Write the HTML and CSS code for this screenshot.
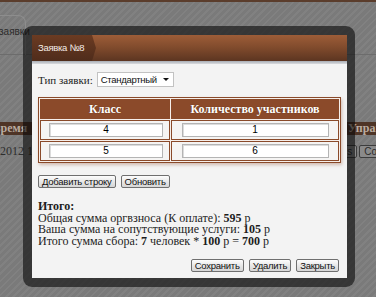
FILE: index.html
```html
<!DOCTYPE html>
<html lang="ru">
<head>
<meta charset="utf-8">
<title>Заявка №8</title>
<link rel="stylesheet" href="styles.css">
</head>
<body>
<div class="page">
  <div class="topline"></div>
  <div class="tabs">
    <div class="tab">заявки</div>
  </div>
  <div class="band">
    <span class="band-left">время</span>
    <span class="band-right">Управ</span>
  </div>
  <div class="row2">
    <span class="date">2012 11</span>
    <span class="bgbtns"><span class="bgbtn">s</span><span class="bgbtn">Co</span></span>
  </div>
</div>

<div class="modal">
  <div class="inner">
    <div class="head">
      <div class="head-tab">Заявка №8</div>
    </div>
    <div class="sep"></div>
    <div class="content">
      <div class="type-row">
        <span class="label">Тип заявки:</span>
        <div class="select"><span>Стандартный</span><span class="caret"></span></div>
      </div>
      <table class="grid">
        <tr><th class="c1">Класс</th><th class="c2">Количество участников</th></tr>
        <tr><td class="c1"><div class="inp w1">4</div></td><td class="c2"><div class="inp w2">1</div></td></tr>
        <tr><td class="c1"><div class="inp w1">5</div></td><td class="c2"><div class="inp w2">6</div></td></tr>
      </table>
      <div class="btns">
        <button class="btn">Добавить строку</button>
        <button class="btn">Обновить</button>
      </div>
      <div class="totals">
        <div class="t-title">Итого:</div>
        <div>Общая сумма оргвзноса (К оплате): <b>595</b> р</div>
        <div>Ваша сумма на сопутствующие услуги: <b>105</b> р</div>
        <div>Итого сумма сбора: <b>7</b> человек * <b>100</b> р = <b>700</b> р</div>
      </div>
      <div class="actions">
        <button class="btn">Сохранить</button>
        <button class="btn">Удалить</button>
        <button class="btn">Закрыть</button>
      </div>
    </div>
  </div>
</div>
</body>
</html>
```
FILE: styles.css
```css
html, body {
  margin: 0;
  padding: 0;
}
body {
  width: 376px;
  height: 297px;
  overflow: hidden;
  position: relative;
  font-family: "Liberation Serif", "DejaVu Serif", serif;
  background: repeating-linear-gradient(135deg, #7a7a7a 0 3px, #818181 3px 5px);
}

/* background page */
.page {
  width: 376px;
}
.topline {
  height: 2px;
  background: #5b3d2c;
}
.tabs {
  height: 53px;
  border-bottom: 1px solid #6c6c6c;
  box-sizing: border-box;
  padding-top: 13px;
}
.tab {
  margin-left: -50px;
  width: 76px;
  height: 40px;
  border: 1px solid #8d8d8d;
  border-bottom: none;
  border-radius: 0 8px 0 0;
  box-sizing: border-box;
  font: 10px "Liberation Sans", sans-serif;
  color: #2c2c2c;
  padding: 10px 0 0 48px;
}
.band {
  margin-top: 67px;
  height: 13px;
  background: #4e3426;
  display: flex;
  justify-content: space-between;
  font-weight: bold;
  font-size: 12px;
  line-height: 13px;
  color: #b9aba0;
}
.band-left {
  margin-left: -6px;
}
.band-right {
  width: 28px;
  overflow: hidden;
  white-space: nowrap;
}
.row2 {
  display: flex;
  justify-content: space-between;
  margin-top: 10px;
  height: 13px;
}
.date {
  font-size: 12px;
  color: #2e2e2e;
  line-height: 13px;
}
.bgbtns {
  display: flex;
  gap: 2px;
  margin-right: -6px;
}
.bgbtn {
  font: 10px "Liberation Sans", sans-serif;
  color: #2a2a2a;
  background: #8a8a8a;
  border: 1px solid #3c3c3c;
  border-radius: 2px;
  padding: 0 4px;
  line-height: 11px;
}

/* modal */
.modal {
  position: absolute;
  left: 23px;
  top: 26px;
  width: 332px;
  height: 261px;
  box-sizing: border-box;
  padding: 9px 8px 9px 9px;
  background: rgba(8, 8, 8, 0.6);
  border-radius: 9px;
}
.inner {
  height: 100%;
  background: #f3f3f3;
  display: flex;
  flex-direction: column;
}
.head {
  height: 26px;
  background: linear-gradient(#9d5d38, #7f4a2c 50%, #5c3521);
}
.head-tab {
  width: 64px;
  height: 26px;
  box-sizing: border-box;
  background: linear-gradient(#6b3b22, #4f2c1b);
  clip-path: polygon(0 0, 60px 0, 64px 50%, 60px 100%, 0 100%);
  font: 9.5px "Liberation Sans", sans-serif;
  color: #f4ece6;
  line-height: 26px;
  padding-left: 6px;
  letter-spacing: -0.3px;
}
.sep {
  height: 3px;
  background: linear-gradient(#a7acb4, #d9dbde);
}
.content {
  flex: 1;
  padding: 0 6px;
  display: flex;
  flex-direction: column;
}
.type-row {
  display: flex;
  align-items: center;
  margin-top: 8px;
  gap: 4px;
}
.label {
  font-size: 11px;
  color: #222;
}
.select {
  width: 77px;
  height: 15px;
  box-sizing: border-box;
  background: #fff;
  border: 1px solid #c2c2c2;
  display: flex;
  align-items: center;
  justify-content: space-between;
  padding: 0 4px 0 3px;
  font: 9.5px "Liberation Sans", sans-serif;
  color: #111;
  letter-spacing: -0.3px;
}
.caret {
  width: 0;
  height: 0;
  border-left: 3px solid transparent;
  border-right: 3px solid transparent;
  border-top: 3px solid #111;
}

.grid {
  margin-top: 10px;
  width: 303px;
  border: 1px solid #8a4a2a;
  border-spacing: 1px;
  background: #f6efeb;
  box-shadow: 1px 2px 3px rgba(150, 90, 60, 0.35);
}
.grid th, .grid td {
  border: 1px solid #8a4a2a;
  padding: 0;
  height: 18px;
  text-align: center;
}
.grid th {
  background: #8b4a2a;
  color: #fff;
  font-size: 12px;
  font-weight: bold;
  text-shadow: 0 0 1px #5a2a10;
}
.grid td {
  background: #f5f4f3;
}
.grid .c1 {
  width: 128px;
}
.inp {
  height: 14px;
  box-sizing: border-box;
  background: #fff;
  border: 1px solid #b4b4b4;
  box-shadow: inset 1px 1px 0 #dcdcdc;
  font: 10px "Liberation Sans", sans-serif;
  line-height: 12px;
  color: #000;
  margin: 0 auto;
}
.w1 {
  width: 114px;
  margin-left: 8px;
}
.w2 {
  width: 147px;
}

.btns {
  display: flex;
  gap: 5px;
  margin-top: 12px;
}
.btn {
  font: 9.5px "Liberation Sans", sans-serif;
  letter-spacing: -0.25px;
  color: #111;
  height: 13px;
  padding: 0 3px;
  line-height: 11px;
  border: 1px solid #6f6f6f;
  border-radius: 2px;
  background: linear-gradient(#fdfdfd, #e4e4e4 60%, #d6d6d6);
  margin: 0;
}
.totals {
  margin-top: 13px;
  font-size: 12px;
  line-height: 11.7px;
  color: #1c1c1c;
}
.t-title {
  font-weight: bold;
}
.actions {
  display: flex;
  justify-content: flex-end;
  gap: 5px;
  margin-top: 11px;
  padding-right: 2px;
}
```
